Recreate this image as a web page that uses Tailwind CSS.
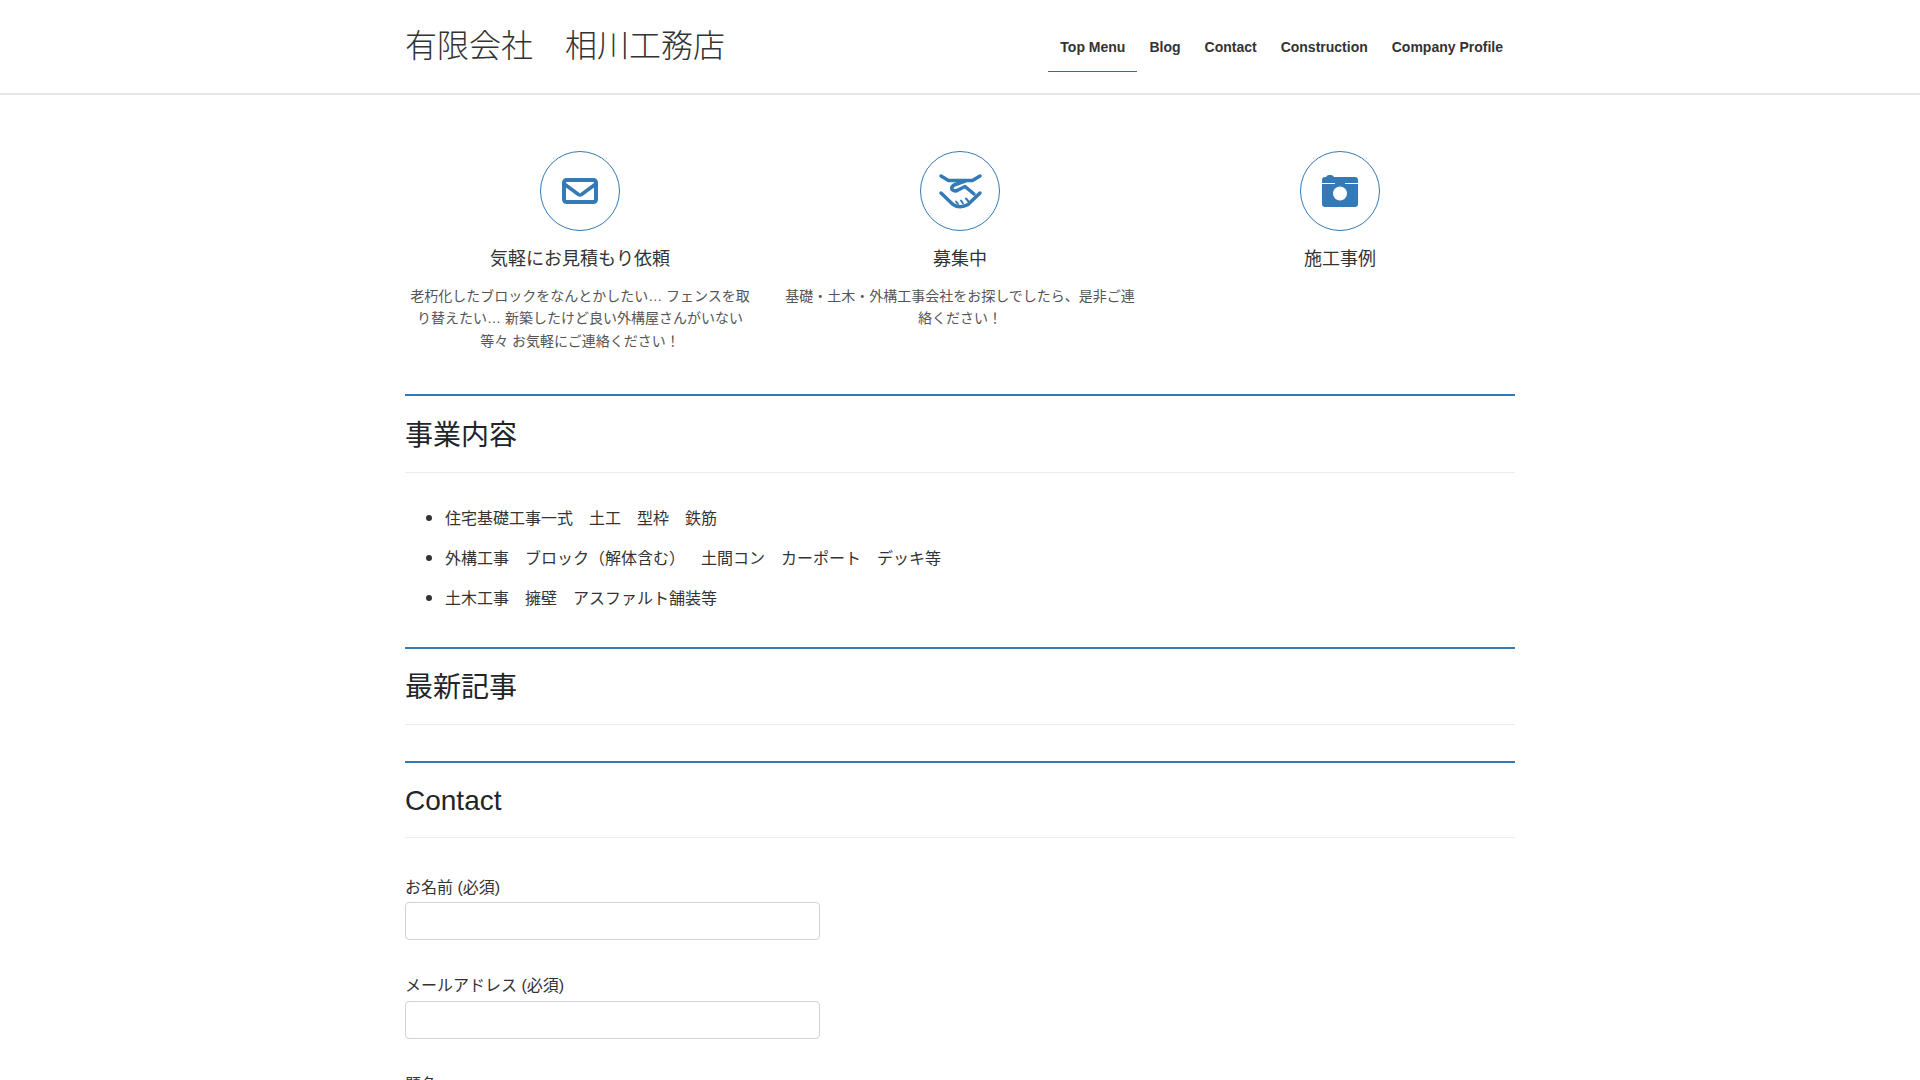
<!DOCTYPE html>
<html lang="ja">
<head>
  <meta charset="UTF-8">
  <title>有限会社　相川工務店</title>
  <script src="https://cdn.jsdelivr.net/npm/@tailwindcss/browser@4"></script>
</head>
<body class="bg-white text-[#212529] text-[16px] font-['Liberation_Sans','Noto_Sans_CJK_JP',sans-serif] [text-spacing-trim:space-all] h-[1080px] overflow-hidden">
  <header class="h-[95px] border-b-2 border-[#e5e5e5]">
    <div class="w-[1110px] mx-auto flex justify-between">
      <div class="text-[32px] leading-[38px] text-[#333] font-light pt-[27px]">有限会社　相川工務店</div>
      <nav class="flex text-[14px] font-bold text-[#333] pt-[24px]">
        <a class="px-3 h-[48px] leading-[46px] border-b border-[#2e6da4]">Top Menu</a>
        <a class="px-3 h-[48px] leading-[46px]">Blog</a>
        <a class="px-3 h-[48px] leading-[46px]">Contact</a>
        <a class="px-3 h-[48px] leading-[46px]">Construction</a>
        <a class="px-3 h-[48px] leading-[46px]">Company Profile</a>
      </nav>
    </div>
  </header>

  <main class="w-[1110px] mx-auto">
    <div class="grid grid-cols-3 gap-[30px] pt-[56px] text-center">
      <div>
        <div class="w-[80px] h-[80px] mx-auto rounded-full border border-[#337ab7] flex items-center justify-center">
          <svg width="36" height="26" viewBox="0 0 36 26" fill="none" stroke="#337ab7" stroke-width="4">
            <rect x="2" y="2" width="32" height="22" rx="2.500"/>
            <path d="M3 6.500l13.500 10q1.500 1 3 0L33 6.500" stroke-width="3.500" stroke-linejoin="round"/>
          </svg>
        </div>
        <h4 class="text-[18px] leading-[22px] text-[#333] mt-[17px]">気軽にお見積もり依頼</h4>
        <p class="text-[14px] leading-[22.4px] text-[#555] mt-[15px]">老朽化したブロックをなんとかしたい… フェンスを取り替えたい… 新築したけど良い外構屋さんがいない等々 お気軽にご連絡ください！</p>
      </div>
      <div>
        <div class="w-[80px] h-[80px] mx-auto rounded-full border border-[#337ab7] flex items-center justify-center">
          <svg width="60" height="50" viewBox="0 1 60 50" fill="none" stroke="#337ab7" stroke-width="3.500" stroke-linecap="round" stroke-linejoin="round">
            <path d="M11 11l7.500 4.500h24L50 11"/>
            <path d="M35 16l-11 4q-3 2-2 4.500 3 2.500 6 .5l7-3.500 9 7.500"/>
            <path d="M11 28l12 11.500q7 4.500 15 0L50 28"/>
            <path d="M26 36.500l2 2.500M31 35.500l2 3M36 33.500l2.500 3" stroke-width="2"/>
          </svg>
        </div>
        <h4 class="text-[18px] leading-[22px] text-[#333] mt-[17px]">募集中</h4>
        <p class="text-[14px] leading-[22.4px] text-[#555] mt-[15px]">基礎・土木・外構工事会社をお探しでしたら、是非ご連絡ください！</p>
      </div>
      <div>
        <div class="w-[80px] h-[80px] mx-auto rounded-full border border-[#337ab7] flex items-center justify-center">
          <svg width="36" height="32" viewBox="0 0 36 32" fill="#337ab7">
            <path d="M3 2h1q1-2 3-2h2q2 0 3 2h21q3 0 3 3v24q0 3-3 3H3q-3 0-3-3V5q0-3 3-3z"/>
            <path d="M0 8.500h13M23 8.500h13" stroke="#fff" stroke-width="1.200"/>
            <circle cx="18" cy="18.500" r="7" fill="#fff"/>
          </svg>
        </div>
        <h4 class="text-[18px] leading-[22px] text-[#333] mt-[17px]">施工事例</h4>
      </div>
    </div>

    <section class="mt-[42px] border-t-2 border-[#337ab7]">
      <h2 class="text-[28px] leading-[34px] pt-[23px] pb-[19px] border-b border-[#e9ecef]">事業内容</h2>
      <ul class="list-disc marker:text-[20px] pl-[40px] pt-[32px] pb-[36px] text-[#333]">
        <li class="leading-[24px] mb-[14px]">住宅基礎工事一式　土工　型枠　鉄筋</li>
        <li class="leading-[24px] mb-[14px]">外構工事　ブロック（解体含む）　土間コン　カーポート　デッキ等</li>
        <li class="leading-[24px]">土木工事　擁壁　アスファルト舗装等</li>
      </ul>
    </section>

    <section class="border-t-2 border-[#337ab7]">
      <h2 class="text-[28px] leading-[34px] pt-[22px] pb-[19px] border-b border-[#e9ecef]">最新記事</h2>
    </section>

    <section class="mt-[36px] border-t-2 border-[#337ab7]">
      <h2 class="text-[28px] leading-[34px] pt-[21px] pb-[19px] border-b border-[#e9ecef]">Contact</h2>
      <form class="pt-[38px]">
        <label class="block leading-[24px] text-[#333]">お名前 (必須)</label>
        <input class="block w-[415px] h-[38px] border border-[#ced4da] rounded mt-[2px] mb-[34px]">
        <label class="block leading-[24px] text-[#333]">メールアドレス (必須)</label>
        <input class="block w-[415px] h-[38px] border border-[#ced4da] rounded mt-[3px] mb-[34px]">
        <label class="block leading-[24px] text-[#333]">題名</label>
      </form>
    </section>
  </main>
</body>
</html>
